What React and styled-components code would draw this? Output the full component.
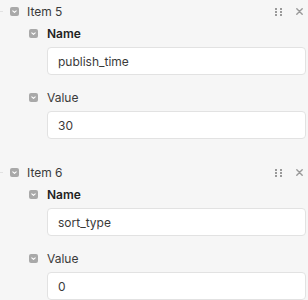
import React from 'react'
import styled, { createGlobalStyle } from 'styled-components'

const items = [
	{ id: 5, name: 'publish_time', value: '30' },
	{ id: 6, name: 'sort_type', value: '0' },
]

const GlobalStyle = createGlobalStyle`
	body {
		margin: 0;
		background: #f6f6f6;
		font-family: Inter, "Helvetica Neue", Arial, sans-serif;
		color: #333;
	}
`

function Chevron() {
	return (
		<svg width="9" height="9" viewBox="0 0 9 9">
			<rect width="9" height="9" rx="2" fill="#a9a9a9" />
			<path d="M2.8 3.8 L4.5 5.4 L6.2 3.8" fill="none" stroke="#fff" strokeWidth="1.1" strokeLinecap="round" strokeLinejoin="round" />
		</svg>
	)
}

function Grip() {
	return (
		<svg width="7" height="8" viewBox="0 0 7 8">
			{[0, 3, 6].map(y =>
				[0, 5].map(x => <rect key={`${x}-${y}`} x={x} y={y} width="2" height="2" fill="#9a9a9a" />)
			)}
		</svg>
	)
}

function Close() {
	return (
		<svg width="7" height="7" viewBox="0 0 7 7">
			<path d="M0.8 0.8 L6.2 6.2 M6.2 0.8 L0.8 6.2" stroke="#9a9a9a" strokeWidth="1.4" strokeLinecap="round" />
		</svg>
	)
}

function Field({ label, bold, value }) {
	return (
		<FieldBlock>
			<LabelRow>
				<Chevron />
				<Label bold={bold}>{label}</Label>
			</LabelRow>
			<Input readOnly value={value} />
		</FieldBlock>
	)
}

export default function App() {
	return (
		<>
			<GlobalStyle />
			<List>
				{items.map(item => (
					<Item key={item.id}>
						<Header>
							<Connector />
							<Chevron />
							<Title>Item {item.id}</Title>
							<Actions>
								<Grip />
								<Close />
							</Actions>
						</Header>
						<Fields>
							<Field label="Name" bold value={item.name} />
							<Field label="Value" value={item.value} />
						</Fields>
					</Item>
				))}
			</List>
		</>
	)
}

const List = styled.div`
	display: flex;
	flex-direction: column;
	gap: 22px;
	padding: 0 2px 0 0;
`

const Item = styled.div`
	display: flex;
	flex-direction: column;
`

const Header = styled.div`
	display: flex;
	align-items: center;
	height: 23px;
	svg { flex: none; }
`

const Connector = styled.span`
	width: 3px;
	height: 1px;
	background: #e2e2e2;
	margin-right: 7px;
`

const Title = styled.span`
	margin-left: 8px;
	font-size: 12px;
	color: #3a3a3a;
`

const Actions = styled.div`
	margin-left: auto;
	display: flex;
	align-items: center;
	gap: 14px;
	padding-right: 3px;
`

const Fields = styled.div`
	display: flex;
	flex-direction: column;
	gap: 12px;
	padding-left: 29px;
`

const FieldBlock = styled.div`
	display: flex;
	flex-direction: column;
	gap: 4px;
`

const LabelRow = styled.div`
	display: flex;
	align-items: center;
	height: 20px;
	gap: 9px;
`

const Label = styled.span`
	font-size: 12px;
	font-weight: ${p => (p.bold ? 600 : 400)};
	color: ${p => (p.bold ? '#222' : '#3a3a3a')};
`

const Input = styled.input`
	box-sizing: border-box;
	margin-left: 18px;
	width: calc(100% - 18px);
	height: 28px;
	padding: 0 10px;
	border: 1px solid #e2e2e2;
	border-radius: 4px;
	background: #fff;
	font: inherit;
	font-size: 12px;
	color: #3a3a3a;
	outline: none;
`
